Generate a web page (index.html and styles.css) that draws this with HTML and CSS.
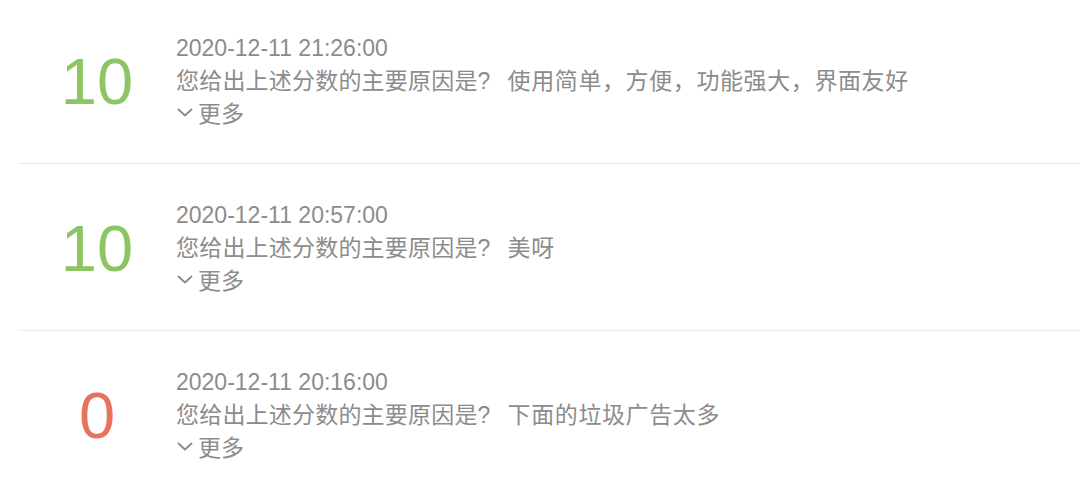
FILE: index.html
```html
<!DOCTYPE html>
<html lang="zh-CN">
<head>
  <meta charset="UTF-8" />
  <meta name="viewport" content="width=device-width, initial-scale=1" />
  <title>评分反馈</title>
  <link rel="stylesheet" href="styles.css">
</head>
<body>

<ul class="feedback-list">
  <li class="feedback">
    <div class="score good">10</div>
    <div class="detail">
      <div class="time">2020-12-11 21:26:00</div>
      <div class="answer">您给出上述分数的主要原因是?<span class="reason">使用简单，方便，功能强大，界面友好</span></div>
      <div class="more">
        <svg class="chevron" width="16" height="9" viewBox="0 0 16 9"><path d="M1.5 1.5 L8 7.5 L14.5 1.5" fill="none" stroke="#8c8c8c" stroke-width="1.9" stroke-linecap="round" stroke-linejoin="round"/></svg>更多
      </div>
    </div>
  </li>
  <li class="feedback">
    <div class="score good">10</div>
    <div class="detail">
      <div class="time">2020-12-11 20:57:00</div>
      <div class="answer">您给出上述分数的主要原因是?<span class="reason">美呀</span></div>
      <div class="more">
        <svg class="chevron" width="16" height="9" viewBox="0 0 16 9"><path d="M1.5 1.5 L8 7.5 L14.5 1.5" fill="none" stroke="#8c8c8c" stroke-width="1.9" stroke-linecap="round" stroke-linejoin="round"/></svg>更多
      </div>
    </div>
  </li>
  <li class="feedback">
    <div class="score bad">0</div>
    <div class="detail">
      <div class="time">2020-12-11 20:16:00</div>
      <div class="answer">您给出上述分数的主要原因是?<span class="reason">下面的垃圾广告太多</span></div>
      <div class="more">
        <svg class="chevron" width="16" height="9" viewBox="0 0 16 9"><path d="M1.5 1.5 L8 7.5 L14.5 1.5" fill="none" stroke="#8c8c8c" stroke-width="1.9" stroke-linecap="round" stroke-linejoin="round"/></svg>更多
      </div>
    </div>
  </li>
</ul>

</body>
</html>
```

FILE: styles.css
```css
body {
  margin: 0;
  background-color: #fff;
  font-family: "Liberation Sans", "Noto Sans CJK SC", sans-serif;
  color: #8c8c8c;
  overflow: hidden;
}

.feedback-list {
  list-style: none;
  margin: -3px 0 0 18px;
  padding: 0;
}

.feedback {
  display: flex;
  align-items: center;
  padding: 35px 0 32px;
  border-bottom: 1px solid #ececec;
}

.score {
  width: 158px;
  text-align: center;
  font-size: 65px;
  line-height: 1;
}

.score.good {
  color: #8cc564;
}

.score.bad {
  color: #e8735c;
}

.detail {
  font-size: 23px;
  line-height: 33px;
}

.answer {
  letter-spacing: 0.2px;
}

.reason {
  margin-left: 17px;
  letter-spacing: 0.6px;
}

.more {
  display: flex;
  align-items: center;
}

.chevron {
  margin: 0 5px 5px 1px;
}
```
